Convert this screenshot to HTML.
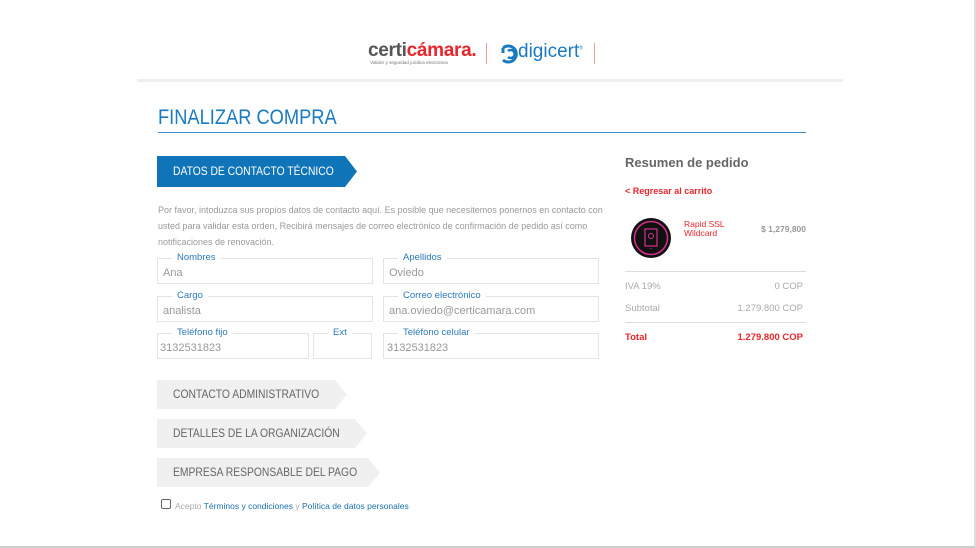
<!DOCTYPE html>
<html><head><meta charset="utf-8"><style>
*{margin:0;padding:0;box-sizing:border-box}
body{width:976px;height:548px;background:#fff;font-family:"Liberation Sans",sans-serif;position:relative;overflow:hidden}
.a{position:absolute}
.frame{left:0;top:0;width:976px;height:548px;border-right:2px solid #ddd;border-bottom:2px solid #ccc}
.hdrline{left:137px;top:79px;width:706px;height:3px;background:#eee}
.title{left:158px;top:106px;font-size:21px;color:#1a7ac0;white-space:nowrap;transform:scaleX(0.87);transform-origin:0 0}
.tline{left:158px;top:132px;width:648px;height:1px;background:#3a8fc8}
.tab{height:31px;font-size:12px;padding-left:16px;line-height:31px;white-space:nowrap}
.tab b{font-weight:normal;display:inline-block;transform:scaleX(0.86);transform-origin:0 50%}
.blue{left:157px;top:156px;width:200px;background:#0f74b8;color:#fff;clip-path:polygon(0 0,188px 0,200px 50%,188px 100%,0 100%)}
.gray{background:#f0f0f0;color:#666;height:29px;line-height:29px}
.p{left:158px;top:202px;width:445px;font-size:9px;line-height:16px;color:#999}
.f{border:1px solid #e3e3e3;height:26px}
.f span.l{position:absolute;top:-7px;left:14px;background:#fff;padding:0 5px;font-size:9.5px;color:#2c7ab8;line-height:12px}
.f span.v{position:absolute;left:5px;top:8px;font-size:11px;color:#999}
.r{font-size:9.5px;color:#aaa}
</style></head><body>
<div class="a frame"></div>
<div class="a" style="left:368px;top:40px;font-size:19px;font-weight:bold;letter-spacing:-0.3px;color:#555">certi<span style="color:#e8262c">cámara.</span></div>
<div class="a" style="left:370px;top:60px;font-size:4.5px;color:#777">Validez y seguridad jurídica electrónica</div>
<div class="a" style="left:486px;top:43px;width:1px;height:21px;background:#e8a09a"></div>
<div class="a" style="left:594px;top:43px;width:1px;height:21px;background:#e8a09a"></div>
<svg class="a" style="left:499px;top:44px" width="20" height="20" viewBox="0 0 20 20"><path d="M4 4 A8 8 0 1 1 4 16 M4 4 L4 9" stroke="#1a7ac0" stroke-width="3" fill="none"/><path d="M9 7 A4 4 0 1 1 9 13" stroke="#1a7ac0" stroke-width="2.5" fill="none"/></svg>
<div class="a" style="left:518px;top:41px;font-size:19px;color:#1a7ac0">digicert<sup style="font-size:5px">®</sup></div>
<div class="a hdrline"></div>
<div class="a title">FINALIZAR COMPRA</div>
<div class="a tline"></div>
<div class="a tab blue"><b>DATOS DE CONTACTO TÉCNICO</b></div>
<div class="a p">Por favor, intoduzca sus propios datos de contacto aquí. Es posible que necesitemos ponernos en contacto con usted para validar esta orden, Recibirá mensajes de correo electrónico de confirmación de pedido así como notificaciones de renovación.</div>
<div class="a f" style="left:157px;top:258px;width:216px"><span class="l">Nombres</span><span class="v">Ana</span></div>
<div class="a f" style="left:383px;top:258px;width:216px"><span class="l">Apellidos</span><span class="v">Oviedo</span></div>
<div class="a f" style="left:157px;top:296px;width:216px"><span class="l">Cargo</span><span class="v">analista</span></div>
<div class="a f" style="left:383px;top:296px;width:216px"><span class="l">Correo electrónico</span><span class="v">ana.oviedo@certicamara.com</span></div>
<div class="a f" style="left:157px;top:333px;width:152px"><span class="l">Teléfono fijo</span><span class="v" style="left:2px">3132531823</span></div>
<div class="a f" style="left:313px;top:333px;width:59px"><span class="l">Ext</span></div>
<div class="a f" style="left:383px;top:333px;width:216px"><span class="l">Teléfono celular</span><span class="v" style="left:3px">3132531823</span></div>
<div class="a tab gray" style="left:157px;top:380px;width:190px;clip-path:polygon(0 0,178px 0,190px 50%,178px 100%,0 100%)"><b>CONTACTO ADMINISTRATIVO</b></div>
<div class="a tab gray" style="left:157px;top:419px;width:210px;clip-path:polygon(0 0,198px 0,210px 50%,198px 100%,0 100%)"><b>DETALLES DE LA ORGANIZACIÓN</b></div>
<div class="a tab gray" style="left:157px;top:458px;width:223px;clip-path:polygon(0 0,211px 0,223px 50%,211px 100%,0 100%)"><b>EMPRESA RESPONSABLE DEL PAGO</b></div>
<div class="a" style="left:161px;top:499px;width:10px;height:10px;border:1px solid #666;border-radius:2px"></div>
<div class="a" style="left:175px;top:501px;font-size:8.5px;color:#aaa">Acepto <span style="color:#1a6fb0">Términos y condiciones</span> y <span style="color:#1a6fb0">Política de datos personales</span></div>

<div class="a" style="left:625px;top:155px;font-size:13px;font-weight:bold;color:#666">Resumen de pedido</div>
<div class="a" style="left:625px;top:186px;font-size:9px;font-weight:bold;color:#e8262c">&lt; Regresar al carrito</div>
<svg class="a" style="left:630px;top:217px" width="42" height="42" viewBox="0 0 42 42"><circle cx="21" cy="21" r="20" fill="#111"/><circle cx="21" cy="21" r="16.5" fill="none" stroke="#d6308e" stroke-width="1.5"/><rect x="15" y="12" width="12" height="17" fill="none" stroke="#d6308e" stroke-width="1.2"/><circle cx="21" cy="19" r="2.5" fill="none" stroke="#d6308e"/><line x1="21" y1="31" x2="21" y2="32" stroke="#d6308e"/></svg>
<div class="a" style="left:684px;top:220px;font-size:8.5px;line-height:9px;color:#e8262c">Rapid SSL<br>Wildcard</div>
<div class="a" style="left:720px;top:224px;width:86px;text-align:right;font-size:8.5px;font-weight:bold;color:#999">$ 1,279,800</div>
<div class="a" style="left:625px;top:271px;width:181px;height:1px;background:#ddd"></div>
<div class="a r" style="left:625px;top:281px">IVA 19%</div>
<div class="a r" style="left:700px;top:281px;width:103px;text-align:right">0 COP</div>
<div class="a r" style="left:625px;top:303px">Subtotal</div>
<div class="a r" style="left:700px;top:303px;width:103px;text-align:right">1.279.800 COP</div>
<div class="a" style="left:625px;top:322px;width:181px;height:1px;background:#ddd"></div>
<div class="a" style="left:625px;top:332px;font-size:9.5px;font-weight:bold;color:#e8262c">Total</div>
<div class="a" style="left:700px;top:332px;width:103px;text-align:right;font-size:9.5px;font-weight:bold;color:#e8262c">1.279.800 COP</div>
</body></html>
